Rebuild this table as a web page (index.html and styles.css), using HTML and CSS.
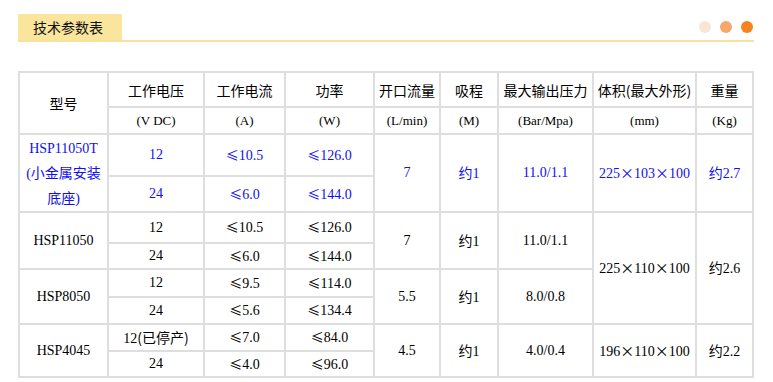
FILE: index.html
```html
<!DOCTYPE html>
<html lang="zh-CN">
<head>
<meta charset="utf-8">
<title>技术参数表</title>
<link rel="stylesheet" href="styles.css">
</head>
<body>
<div class="page">
  <div class="section-head">
    <div class="tab">技术参数表</div>
    <div class="dots">
      <span class="dot dot-light"></span>
      <span class="dot dot-mid"></span>
      <span class="dot dot-dark"></span>
    </div>
  </div>

  <table class="spec">
    <colgroup>
      <col class="c-model"><col class="c-volt"><col class="c-amp"><col class="c-watt"><col class="c-flow"><col class="c-lift"><col class="c-press"><col class="c-size"><col class="c-weight">
    </colgroup>
    <thead>
      <tr class="row-h1">
        <th rowspan="2" class="title">型号</th>
        <th class="title">工作电压</th>
        <th class="title">工作电流</th>
        <th class="title">功率</th>
        <th class="title">开口流量</th>
        <th class="title">吸程</th>
        <th class="title">最大输出压力</th>
        <th class="title">体积(最大外形)</th>
        <th class="title">重量</th>
      </tr>
      <tr class="row-h2">
        <td class="unit">(V DC)</td>
        <td class="unit">(A)</td>
        <td class="unit">(W)</td>
        <td class="unit">(L/min)</td>
        <td class="unit">(M)</td>
        <td class="unit">(Bar/Mpa)</td>
        <td class="unit">(mm)</td>
        <td class="unit">(Kg)</td>
      </tr>
    </thead>
    <tbody>
      <tr class="blue row-b1">
        <td rowspan="2" class="model-multi">HSP11050T<br>(小金属安装<br>底座)</td>
        <td>12</td><td><span class="le">≤</span>10.5</td><td><span class="le">≤</span>126.0</td>
        <td rowspan="2">7</td><td rowspan="2"><span class="cjk">约</span>1</td><td rowspan="2">11.0/1.1</td>
        <td rowspan="2">225<span class="x">×</span>103<span class="x">×</span>100</td><td rowspan="2"><span class="cjk">约</span>2.7</td>
      </tr>
      <tr class="blue row-b2">
        <td>24</td><td><span class="le">≤</span>6.0</td><td><span class="le">≤</span>144.0</td>
      </tr>
      <tr class="row-a1">
        <td rowspan="2">HSP11050</td>
        <td>12</td><td><span class="le">≤</span>10.5</td><td><span class="le">≤</span>126.0</td>
        <td rowspan="2">7</td><td rowspan="2"><span class="cjk">约</span>1</td><td rowspan="2">11.0/1.1</td>
        <td rowspan="4">225<span class="x">×</span>110<span class="x">×</span>100</td><td rowspan="4"><span class="cjk">约</span>2.6</td>
      </tr>
      <tr class="row-a2">
        <td>24</td><td><span class="le">≤</span>6.0</td><td><span class="le">≤</span>144.0</td>
      </tr>
      <tr class="row-b1x">
        <td rowspan="2">HSP8050</td>
        <td>12</td><td><span class="le">≤</span>9.5</td><td><span class="le">≤</span>114.0</td>
        <td rowspan="2">5.5</td><td rowspan="2"><span class="cjk">约</span>1</td><td rowspan="2">8.0/0.8</td>
      </tr>
      <tr class="row-b2x">
        <td>24</td><td><span class="le">≤</span>5.6</td><td><span class="le">≤</span>134.4</td>
      </tr>
      <tr class="row-c1">
        <td rowspan="2">HSP4045</td>
        <td>12<span class="cjk">(已停产)</span></td><td><span class="le">≤</span>7.0</td><td><span class="le">≤</span>84.0</td>
        <td rowspan="2">4.5</td><td rowspan="2"><span class="cjk">约</span>1</td><td rowspan="2">4.0/0.4</td>
        <td rowspan="2">196<span class="x">×</span>110<span class="x">×</span>100</td><td rowspan="2"><span class="cjk">约</span>2.2</td>
      </tr>
      <tr class="row-c2">
        <td>24</td><td><span class="le">≤</span>4.0</td><td><span class="le">≤</span>96.0</td>
      </tr>
    </tbody>
  </table>
</div>
</body>
</html>
```

FILE: styles.css
```css
html, body {
  margin: 0;
  padding: 0;
  background: #ffffff;
}

body {
  font-family: "Liberation Serif", "Noto Sans CJK SC", serif;
  font-size: 14px;
  color: #000;
}

.page {
  padding: 14px 19px 0 18px;
}

.section-head {
  display: flex;
  align-items: center;
  justify-content: space-between;
  border-bottom: 2px solid #f7e19b;
  height: 26px;
}

.tab {
  box-sizing: border-box;
  width: 104px;
  height: 26px;
  padding-left: 15px;
  background: #f9e59b;
  font-family: "Noto Sans CJK SC", sans-serif;
  font-size: 14px;
  line-height: 26px;
  color: #111;
}

.dots {
  display: flex;
  gap: 9px;
  padding-right: 1px;
}

.dot {
  width: 12px;
  height: 12px;
  border-radius: 50%;
}

.dot-light { background: #f9e5d6; }
.dot-mid { background: #f4a96a; }
.dot-dark { background: #f5831e; }

.spec {
  margin-top: 29px;
  width: 736px;
  border-collapse: collapse;
  table-layout: fixed;
}

.c-model { width: 89px; }
.c-volt { width: 96px; }
.c-amp { width: 81px; }
.c-watt { width: 89px; }
.c-flow { width: 66px; }
.c-lift { width: 58px; }
.c-press { width: 95px; }
.c-size { width: 103px; }
.c-weight { width: 57px; }

.spec th,
.spec td {
  border: 2px solid #dedede;
  padding: 0;
  text-align: center;
  vertical-align: middle;
  white-space: nowrap;
  line-height: 20px;
  font-weight: normal;
}

.spec .title {
  font-family: "Noto Sans CJK SC", sans-serif;
  font-size: 14px;
  color: #000;
}

.spec .unit {
  font-size: 13px;
}

.cjk, .le, .x {
  font-family: "Noto Sans CJK SC", sans-serif;
}

.le { font-size: 13px; }

.blue td { color: #1010f0; }

.spec .model-multi {
  line-height: 25px;
  white-space: normal;
}

.row-h1 { height: 35px; }
.row-h2 { height: 27px; }
.row-b1 { height: 42px; }
.row-b2 { height: 36px; }
.row-a1 { height: 31px; }
.row-a2 { height: 26px; }
.row-b1x { height: 28px; }
.row-b2x { height: 27px; }
.row-c1 { height: 27px; }
.row-c2 { height: 26px; }
```
